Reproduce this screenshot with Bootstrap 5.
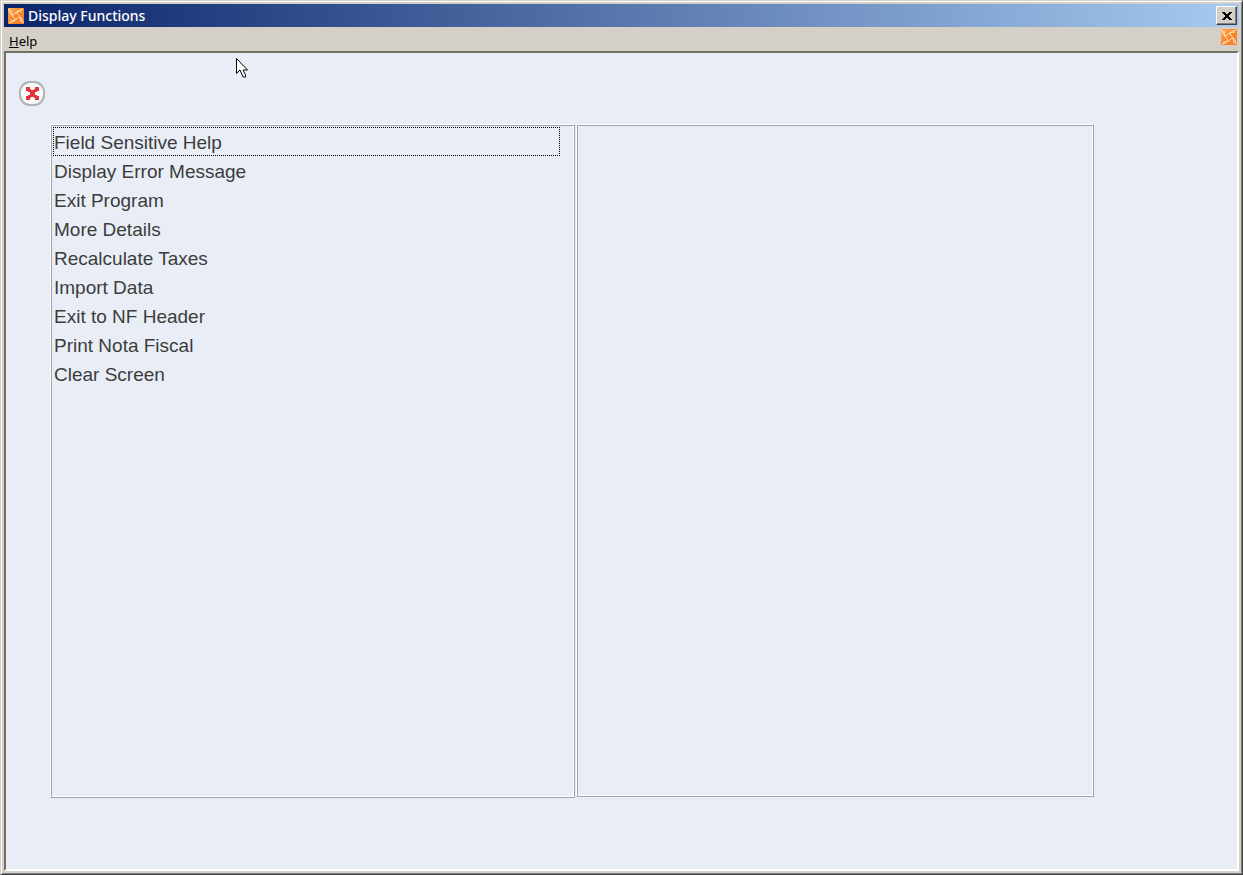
<!DOCTYPE html>
<html lang="en">
<head>
<meta charset="utf-8">
<meta name="viewport" content="width=device-width, initial-scale=1">
<title>Display Functions</title>
<link href="https://cdn.jsdelivr.net/npm/bootstrap@5.3.0/dist/css/bootstrap.min.css" rel="stylesheet">
<style>
  body { background: #d4d0c8; font-family: "Liberation Sans", Arial, sans-serif; color: #3c3c3c; }
  .window-frame { padding: 3px; border: 1px solid; border-color: #d4d0c8 #404040 #404040 #d4d0c8; box-shadow: inset 1px 1px #fff, inset -1px -1px #808080; }
  .title-bar { height: 23px; padding: 0 2px 0 4px; background: linear-gradient(to right, #0a246a, #a6caf0); }
  .title-text { font: 500 14px/23px "Noto Sans", sans-serif; color: #fff; }
  .close-btn { width: 21px; height: 19px; background: #d4d0c8; border: 1px solid; border-color: #fff #404040 #404040 #fff; box-shadow: inset -1px -1px #808080; }
  .menu-bar { height: 24px; padding: 0 2px 0 5px; }
  .menu-bar button { font: 13px/22px "Noto Sans", sans-serif; color: #000; }
  .client-area { background: #e9eef6; border: 2px solid; border-color: #716f64 #fff #fff #716f64; }
  .exit-btn { width: 26px; height: 26px; margin: 28px 0 0 13px; }
  .panels { display: grid; grid-template-columns: 525fr 518fr; column-gap: 1px; margin: 17px 143px 71px 44px; }
  .panel-edge { border: 1px solid; border-color: #fff #a0a4ac #a0a4ac #fff; box-shadow: inset 1px 1px #a0a4ac, inset -1px -1px #fff; padding: 2px 14px 2px 2px; }
  .panel-detail { margin-bottom: 1px; }
  .function-item { padding-top: 2px; font-size: 19px; line-height: 25px; color: #3c3c3c; border: 1px solid transparent; }
  .function-item.current { border: 1px dotted #000; }
  .pointer { left: 235px; top: 56px; }
</style>
</head>
<body>
<div class="window-frame d-flex flex-column min-vh-100 position-relative">
  <header class="title-bar d-flex align-items-center">
    <svg width="16" height="16" viewBox="0 0 16 16" aria-hidden="true">
      <defs>
        <linearGradient id="flame" x1="0" y1="0" x2="1" y2="1"><stop offset="0" stop-color="#ffae5c"/><stop offset=".5" stop-color="#fb8420"/><stop offset="1" stop-color="#f58236"/></linearGradient>
        <g id="logo">
          <rect width="16" height="16" fill="url(#flame)"/>
          <path d="M1 1Q1 5 5 7Q9 2 14 3M15 1Q11 1 9 5Q14 9 13 14M15 15Q15 11 11 9Q7 14 2 13M1 15Q5 15 7 11Q2 7 3 2" fill="none" stroke="#fff0d8" stroke-opacity=".9"/>
        </g>
      </defs>
      <use href="#logo"/>
    </svg>
    <span class="title-text ms-1 flex-grow-1">Display Functions</span>
    <button type="button" class="close-btn p-0 d-flex align-items-center justify-content-center" aria-label="Close">
      <svg width="10" height="8" viewBox="0 0 10 8" shape-rendering="crispEdges"><path d="M0 0h3v1h1v1h2V1h1V0h3v1H9v1H8v1H7v2h1v1h1v1h1v1H7V7H6V6H4v1H3v1H0V7h1V6h1V5h1V3H2V2H1V1H0z"/></svg>
    </button>
  </header>
  <nav class="menu-bar d-flex align-items-center justify-content-between">
    <button type="button" class="border-0 bg-transparent p-0 pt-1"><u>H</u>elp</button>
    <svg width="16" height="16" viewBox="0 0 16 16" class="mb-1" aria-hidden="true"><use href="#logo"/></svg>
  </nav>
  <main class="client-area flex-grow-1 d-flex flex-column">
    <button type="button" class="exit-btn border-0 bg-transparent p-0 d-flex" aria-label="Exit">
      <svg width="26" height="26" viewBox="0 0 26 26">
        <rect x="1" y="1" width="24" height="23" rx="10" fill="#fafafa" stroke="#b0b2b4" stroke-width="2"/>
        <path d="M7 6h4v2h1v1h3V8h1V6h4v4h-2v1h-2v3h2v1h2v4h-4v-2h-1v-1h-3v1h-1v2H7v-4h2v-1h2v-3H9v-1H7z" fill="#e5343a" shape-rendering="crispEdges"/>
      </svg>
    </button>
    <div class="panels flex-grow-1">
      <section class="panel-edge" aria-label="Functions">
        <ul class="list-unstyled m-0">
          <li><a href="#" class="function-item current d-block text-decoration-none">Field Sensitive Help</a></li>
          <li><a href="#" class="function-item d-block text-decoration-none">Display Error Message</a></li>
          <li><a href="#" class="function-item d-block text-decoration-none">Exit Program</a></li>
          <li><a href="#" class="function-item d-block text-decoration-none">More Details</a></li>
          <li><a href="#" class="function-item d-block text-decoration-none">Recalculate Taxes</a></li>
          <li><a href="#" class="function-item d-block text-decoration-none">Import Data</a></li>
          <li><a href="#" class="function-item d-block text-decoration-none">Exit to NF Header</a></li>
          <li><a href="#" class="function-item d-block text-decoration-none">Print Nota Fiscal</a></li>
          <li><a href="#" class="function-item d-block text-decoration-none">Clear Screen</a></li>
        </ul>
      </section>
      <section class="panel-edge panel-detail" aria-label="Details"></section>
    </div>
  </main>
  <svg class="pointer position-absolute" width="12" height="21" viewBox="0 0 12 21" aria-hidden="true"><path d="M.5 1.500v15l3.500-3.500 3 7h2.500v-2l-2.500-5h4.500z" fill="#fff" stroke="#000"/></svg>
</div>
<script src="https://cdn.jsdelivr.net/npm/bootstrap@5.3.0/dist/js/bootstrap.bundle.min.js"></script>
</body>
</html>
